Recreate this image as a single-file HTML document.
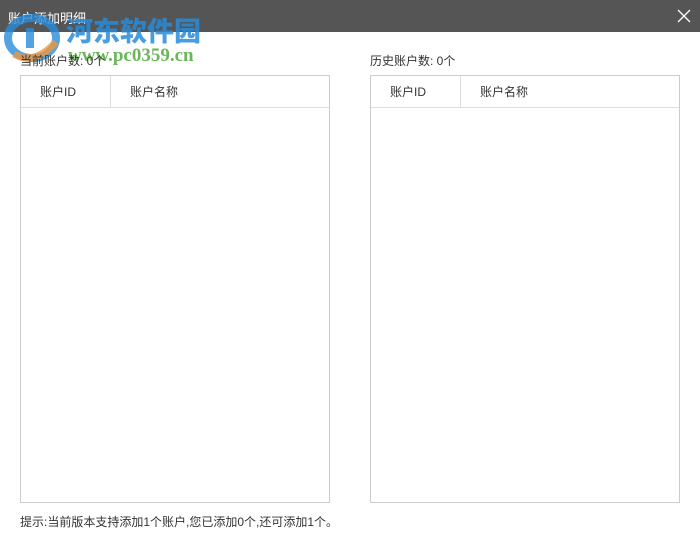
<!DOCTYPE html>
<html><head><meta charset="utf-8"><style>
body{margin:0;width:700px;height:550px;background:#fff;position:relative;overflow:hidden;font-family:"Liberation Sans","Noto Sans CJK SC",sans-serif;font-size:12px;color:#333}
.title{position:absolute;left:0;top:0;width:700px;height:32px;background:#555}
.title span{position:absolute;left:8px;top:8px;color:#fff;font-size:13px}
.x{position:absolute;left:677px;top:9px}
.lbl{position:absolute;top:52px}
.tbl{position:absolute;top:75px;width:308px;height:426px;border:1px solid #ccc}
.hd{height:31px;border-bottom:1px solid #ddd;position:relative}
.hd .d{position:absolute;left:89px;top:0;width:1px;height:31px;background:#ddd}
.hd span{position:absolute;top:7px}
.wm1{position:absolute;left:66px;top:10px;font-family:"Noto Sans CJK SC",sans-serif;font-weight:900;font-size:27px;color:rgba(40,140,220,.85);letter-spacing:0px}
.wm2{position:absolute;left:68px;top:45px;font-family:"Liberation Serif",serif;font-weight:bold;font-size:19px;color:rgba(80,170,60,.85)}
</style></head><body>
<div class="title"><span>账户添加明细</span>
<svg class="x" width="14" height="14"><path d="M1 1L13 13M13 1L1 13" stroke="#fff" stroke-width="1.3"/></svg></div>
<svg style="position:absolute;left:4px;top:14px" width="60" height="50"><ellipse cx="28" cy="24" rx="24" ry="20" fill="none" stroke="rgba(40,140,220,.8)" stroke-width="8"/><path d="M10 40 Q30 52 52 28" stroke="rgba(240,150,60,.8)" stroke-width="7" fill="none"/><rect x="22" y="14" width="8" height="20" fill="rgba(40,140,220,.8)"/></svg>
<div class="wm1">河东软件园</div>
<div class="wm2">www.pc0359.cn</div>
<div class="lbl" style="left:20px">当前账户数: 0个</div>
<div class="lbl" style="left:370px">历史账户数: 0个</div>
<div class="tbl" style="left:20px"><div class="hd"><span style="left:19px">账户ID</span><div class="d"></div><span style="left:109px">账户名称</span></div></div>
<div class="tbl" style="left:370px"><div class="hd"><span style="left:19px">账户ID</span><div class="d"></div><span style="left:109px">账户名称</span></div></div>
<div style="position:absolute;left:20px;top:513px">提示:当前版本支持添加1个账户,您已添加0个,还可添加1个。</div>
</body></html>
